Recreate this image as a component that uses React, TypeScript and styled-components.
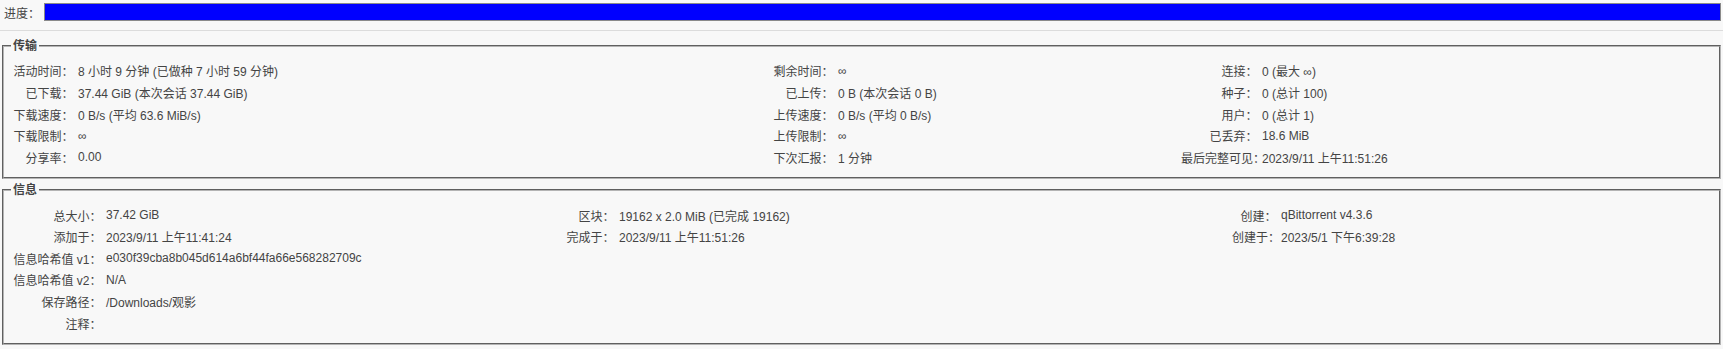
import React from 'react';
import styled, { createGlobalStyle } from 'styled-components';

const GlobalStyle = createGlobalStyle`
  html, body {
    margin: 0;
    padding: 0;
    background: #f8f8f8;
  }
  body {
    font-family: "Liberation Sans", "Noto Sans CJK SC", Arial, sans-serif;
    font-size: 12px;
    color: #444;
  }
`;

const Panel = styled.div`
  width: 1723px;
  height: 349px;
  overflow: hidden;
  background: #f8f8f8;
`;

const ProgressRow = styled.div`
  display: flex;
  align-items: center;
  height: 18px;
  padding: 3px 2px 0 4px;
`;

const ProgressLabel = styled.span`
  width: 40px;
  white-space: nowrap;
`;

const ProgressBar = styled.div`
  flex: 1;
  height: 18px;
  box-sizing: border-box;
  border: 1px solid #8a8a8a;
  background: #fff;
`;

const ProgressFill = styled.div`
  height: 100%;
  background: #0000ff;
`;

const Separator = styled.hr`
  margin: 9px 0 7px 0;
  border: none;
  height: 1px;
  background: #dcdcdc;
`;

const Group = styled.fieldset<{ $gap?: number }>`
  margin: ${p => p.$gap ?? 0}px 2px 0 2px;
  padding: 6px 9px 9px 9px;
  border: 2px groove #b4b4b4;
  min-width: 0;
`;

const Legend = styled.legend`
  margin-left: -2px;
  padding: 0 2px;
  line-height: 16px;
  font-weight: bold;
  color: #444;
`;

const Grid = styled.div<{ $cols: string }>`
  display: grid;
  grid-template-columns: ${p => p.$cols};
  grid-auto-rows: 21.65px;
  align-items: center;
`;

const Label = styled.div`
  text-align: right;
  white-space: nowrap;
  padding-right: 3.5px;
`;

const Value = styled.div`
  white-space: nowrap;
  padding-left: 1px;
`;

type Row = string[];

const transferRows: Row[] = [
  ['活动时间：', '8 小时 9 分钟 (已做种 7 小时 59 分钟)', '剩余时间：', '∞', '连接：', '0 (最大 ∞)'],
  ['已下载：', '37.44 GiB (本次会话 37.44 GiB)', '已上传：', '0 B (本次会话 0 B)', '种子：', '0 (总计 100)'],
  ['下载速度：', '0 B/s (平均 63.6 MiB/s)', '上传速度：', '0 B/s (平均 0 B/s)', '用户：', '0 (总计 1)'],
  ['下载限制：', '∞', '上传限制：', '∞', '已丢弃：', '18.6 MiB'],
  ['分享率：', '0.00', '下次汇报：', '1 分钟', '最后完整可见：', '2023/9/11 上午11:51:26'],
];

const infoRows: Row[] = [
  ['总大小：', '37.42 GiB', '区块：', '19162 x 2.0 MiB (已完成 19162)', '创建：', 'qBittorrent v4.3.6'],
  ['添加于：', '2023/9/11 上午11:41:24', '完成于：', '2023/9/11 上午11:51:26', '创建于：', '2023/5/1 下午6:39:28'],
  ['信息哈希值 v1：', 'e030f39cba8b045d614a6bf44fa66e568282709c', '', '', '', ''],
  ['信息哈希值 v2：', 'N/A', '', '', '', ''],
  ['保存路径：', '/Downloads/观影', '', '', '', ''],
  ['注释：', '', '', '', '', ''],
];

function Section({ title, cols, rows, gap }: { title: string; cols: string; rows: Row[]; gap?: number }) {
  return (
    <Group $gap={gap}>
      <Legend>{title}</Legend>
      <Grid $cols={cols}>
        {rows.map((row, i) =>
          row.map((cell, j) =>
            j % 2 === 0 ? <Label key={`${i}-${j}`}>{cell}</Label> : <Value key={`${i}-${j}`}>{cell}</Value>
          )
        )}
      </Grid>
    </Group>
  );
}

export default function App() {
  return (
    <Panel>
      <GlobalStyle />
      <ProgressRow>
        <ProgressLabel>进度：</ProgressLabel>
        <ProgressBar>
          <ProgressFill style={{ width: '100%' }} />
        </ProgressBar>
      </ProgressRow>
      <Separator />
      <Section title="传输" cols="64px 695px 65px 344px 80px 1fr" rows={transferRows} />
      <Section title="信息" cols="92px 461px 52px 614px 48px 1fr" rows={infoRows} gap={3} />
    </Panel>
  );
}
